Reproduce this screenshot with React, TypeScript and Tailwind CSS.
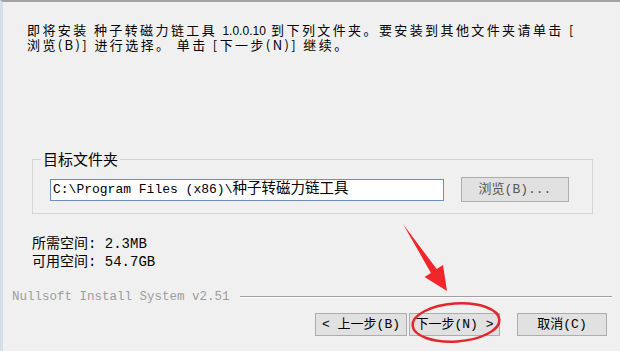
import React from 'react';

const cjk = "font-['Noto_Sans_CJK_SC',sans-serif]";
const mono = "font-['Liberation_Mono','Noto_Sans_CJK_SC',monospace]";

const Button = ({ children, className = '' }: { children: React.ReactNode; className?: string }) => (
  <button
    type="button"
    className={`h-[23px] border border-[#adadad] bg-[#e1e1e1] text-[13px] leading-[21px] text-black ${mono} ${className}`}
  >
    {children}
  </button>
);

const App = () => {
  return (
    <div className="relative h-[351px] w-[620px] overflow-hidden border-l-[3px] border-t-2 border-l-[#d6dfe9] border-t-[#a3a3a3] bg-[#f0f0f0] text-black">
      {/* Intro text */}
      <div className={`ml-[24px] mt-[20px] whitespace-nowrap text-[13px] leading-[15px] tracking-[2.4px] ${cjk}`}>
        <div className="h-[15px]">
          即将安装 种子转磁力链工具 <span className="font-['Liberation_Sans'] text-[12px] tracking-normal">1.0.0.10</span> 到下列文件夹。要安装到其他文件夹请单击 [
        </div>
        <div className="h-[15px]">浏览(B)] 进行选择。 单击 [下一步(N)] 继续。</div>
      </div>

      {/* Destination folder */}
      <fieldset className="ml-[29px] mt-[99px] w-[561px] border border-[#d5d5d5] pb-[11px] pl-[8px]">
        <legend className={`px-[2px] text-[15px] leading-[16px] ${cjk}`}>目标文件夹</legend>
        <div className="ml-[9px] mt-[10px] flex items-center gap-[17px]">
          <div className={`flex h-[22px] w-[394px] items-center border border-[#6d8fbf] bg-white pl-[2px] text-[13px] ${mono}`}>
            C:\Program Files (x86)\<span className="text-[14.5px]">种子转磁力链工具</span>
          </div>
          <button
            type="button"
            className={`h-[25px] w-[108px] border border-[#adadad] bg-[#e1e1e1] text-[13px] text-[#555] ${mono}`}
          >
            浏览(B)...
          </button>
        </div>
      </fieldset>

      {/* Space info */}
      <div className={`ml-[29px] mt-[21px] text-[14px] leading-[18px] ${mono}`}>
        <div>所需空间: 2.3MB</div>
        <div>可用空间: 54.7GB</div>
      </div>

      {/* Branding line */}
      <div className="mt-[18px] flex items-center pl-[9px] pr-[8px]">
        <span className={`text-[12.5px] leading-[16px] text-[#9d9d9d] ${mono}`}>Nullsoft Install System v2.51</span>
        <div className="ml-[10px] flex-1 border-b border-t border-b-white border-t-[#a0a0a0]" />
      </div>

      {/* Buttons */}
      <div className="mt-[8px] flex justify-end pr-[13px]">
        <Button className="w-[92px]">&lt; 上一步(B)</Button>
        <Button className="ml-[2px] w-[91px]">下一步(N) &gt;</Button>
        <Button className="ml-[17px] w-[90px]">取消(C)</Button>
      </div>

      {/* Annotation */}
      <svg className="pointer-events-none absolute -left-[3px] -top-[2px] h-[351px] w-[620px]" viewBox="0 0 620 351">
        <polygon points="403,224 436.7,269.1 443,265 447,291 424.6,277 430.9,272.9" fill="#f0262b" />
        <ellipse cx="456" cy="322.5" rx="43.5" ry="19" fill="none" stroke="#e3262b" strokeWidth="2.5" transform="rotate(-4 456 322.5)" />
      </svg>
    </div>
  );
};

export default App;
